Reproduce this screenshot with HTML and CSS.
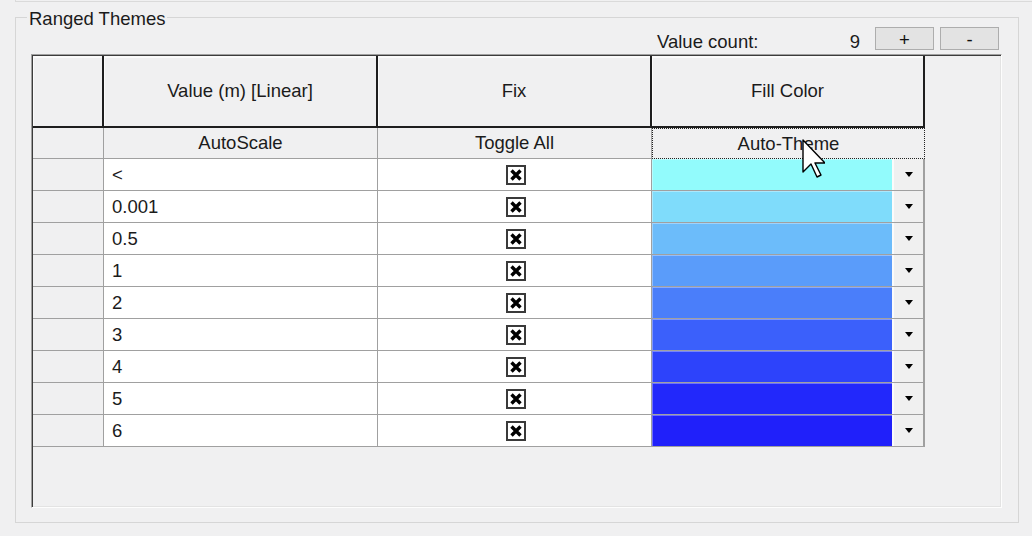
FILE: index.html
```html
<!DOCTYPE html>
<html>
<head>
<meta charset="utf-8">
<link rel="stylesheet" href="styles.css">
</head>
<body>
<div class="topline"></div>
<fieldset class="group">
  <legend>Ranged Themes</legend>
  <div class="controls">
    <div class="count"><span>Value count:</span><span>9</span></div>
    <button class="btn plus">+</button>
    <button class="btn minus">-</button>
  </div>
  <div class="panel">
    <div class="grid">
      <div class="hc"></div>
      <div class="hc">Value (m) [Linear]</div>
      <div class="hc">Fix</div>
      <div class="hc">Fill Color</div>

      <div class="rh"></div>
      <div class="sub">AutoScale</div>
      <div class="sub">Toggle All</div>
      <div class="sub focus">Auto-Theme</div>

      <div class="rh"></div><div class="val">&lt;</div>
      <div class="fix"><svg class="chk" viewBox="0 0 20 20"><rect x="1" y="1" width="18" height="18" fill="#fff" stroke="#3a3a3a" stroke-width="2"/><path d="M5.5 5.5L14.5 14.5M14.5 5.5L5.5 14.5" stroke="#000" stroke-width="3.4"/></svg></div>
      <div class="fill"><div class="swatch c1"></div><div class="dd"><i></i></div></div>

      <div class="rh"></div><div class="val">0.001</div>
      <div class="fix"><svg class="chk" viewBox="0 0 20 20"><rect x="1" y="1" width="18" height="18" fill="#fff" stroke="#3a3a3a" stroke-width="2"/><path d="M5.5 5.5L14.5 14.5M14.5 5.5L5.5 14.5" stroke="#000" stroke-width="3.4"/></svg></div>
      <div class="fill"><div class="swatch c2"></div><div class="dd"><i></i></div></div>

      <div class="rh"></div><div class="val">0.5</div>
      <div class="fix"><svg class="chk" viewBox="0 0 20 20"><rect x="1" y="1" width="18" height="18" fill="#fff" stroke="#3a3a3a" stroke-width="2"/><path d="M5.5 5.5L14.5 14.5M14.5 5.5L5.5 14.5" stroke="#000" stroke-width="3.4"/></svg></div>
      <div class="fill"><div class="swatch c3"></div><div class="dd"><i></i></div></div>

      <div class="rh"></div><div class="val">1</div>
      <div class="fix"><svg class="chk" viewBox="0 0 20 20"><rect x="1" y="1" width="18" height="18" fill="#fff" stroke="#3a3a3a" stroke-width="2"/><path d="M5.5 5.5L14.5 14.5M14.5 5.5L5.5 14.5" stroke="#000" stroke-width="3.4"/></svg></div>
      <div class="fill"><div class="swatch c4"></div><div class="dd"><i></i></div></div>

      <div class="rh"></div><div class="val">2</div>
      <div class="fix"><svg class="chk" viewBox="0 0 20 20"><rect x="1" y="1" width="18" height="18" fill="#fff" stroke="#3a3a3a" stroke-width="2"/><path d="M5.5 5.5L14.5 14.5M14.5 5.5L5.5 14.5" stroke="#000" stroke-width="3.4"/></svg></div>
      <div class="fill"><div class="swatch c5"></div><div class="dd"><i></i></div></div>

      <div class="rh"></div><div class="val">3</div>
      <div class="fix"><svg class="chk" viewBox="0 0 20 20"><rect x="1" y="1" width="18" height="18" fill="#fff" stroke="#3a3a3a" stroke-width="2"/><path d="M5.5 5.5L14.5 14.5M14.5 5.5L5.5 14.5" stroke="#000" stroke-width="3.4"/></svg></div>
      <div class="fill"><div class="swatch c6"></div><div class="dd"><i></i></div></div>

      <div class="rh"></div><div class="val">4</div>
      <div class="fix"><svg class="chk" viewBox="0 0 20 20"><rect x="1" y="1" width="18" height="18" fill="#fff" stroke="#3a3a3a" stroke-width="2"/><path d="M5.5 5.5L14.5 14.5M14.5 5.5L5.5 14.5" stroke="#000" stroke-width="3.4"/></svg></div>
      <div class="fill"><div class="swatch c7"></div><div class="dd"><i></i></div></div>

      <div class="rh"></div><div class="val">5</div>
      <div class="fix"><svg class="chk" viewBox="0 0 20 20"><rect x="1" y="1" width="18" height="18" fill="#fff" stroke="#3a3a3a" stroke-width="2"/><path d="M5.5 5.5L14.5 14.5M14.5 5.5L5.5 14.5" stroke="#000" stroke-width="3.4"/></svg></div>
      <div class="fill"><div class="swatch c8"></div><div class="dd"><i></i></div></div>

      <div class="rh"></div><div class="val">6</div>
      <div class="fix"><svg class="chk" viewBox="0 0 20 20"><rect x="1" y="1" width="18" height="18" fill="#fff" stroke="#3a3a3a" stroke-width="2"/><path d="M5.5 5.5L14.5 14.5M14.5 5.5L5.5 14.5" stroke="#000" stroke-width="3.4"/></svg></div>
      <div class="fill"><div class="swatch c9"></div><div class="dd"><i></i></div></div>
    </div>
  </div>
</fieldset>
<svg class="cursor" viewBox="0 0 12 20" width="24" height="40"><path d="M1 1L1 17L5 13L8 19.5L10 18.5L7 12.5L12 12.5Z" fill="#fff" stroke="#000" stroke-width="0.7" stroke-linejoin="round"/></svg>
</body>
</html>
```

FILE: styles.css
```css
html, body {
  margin: 0;
  background: #f0f0f1;
}
body {
  width: 1032px;
  height: 536px;
  overflow: hidden;
  font-family: "Liberation Sans", Arial, sans-serif;
  font-size: 18.5px;
  color: #1b1b1b;
}
.topline {
  margin-left: 15px;
  height: 1px;
  border-bottom: 1px solid #dadada;
  border-left: 1px solid #dadada;
}
.group {
  margin: 5px 0 0 15px;
  width: 1004px;
  height: 516px;
  box-sizing: border-box;
  border: 1px solid #d6d6d6;
  padding: 0 16px 0 15px;
  min-width: 0;
}
.group legend {
  margin-left: -4px;
  padding: 4px 2px 0;
  line-height: 16px;
  font-size: 18.5px;
}
.controls {
  height: 27px;
  display: flex;
  justify-content: flex-end;
  align-items: flex-start;
  padding-right: 3px;
}
.count {
  width: 203px;
  display: flex;
  justify-content: space-between;
  line-height: 23px;
  padding-top: 3px;
}
.btn {
  width: 59px;
  height: 23px;
  margin-left: 6px;
  box-sizing: border-box;
  background: #e3e3e3;
  border: 1px solid #adadad;
  padding: 2px 0 0;
  font-family: "Liberation Sans", Arial, sans-serif;
  font-size: 18.5px;
  line-height: 19px;
  color: #111;
}
.plus {
  margin-left: 15px;
}
.panel {
  height: 454px;
  box-sizing: border-box;
  border: 1px solid;
  border-color: #a0a0a0 #fdfdfd #fdfdfd #a0a0a0;
  box-shadow: inset 1px 1px 0 #3c3c3c, inset -1px -1px 0 #e3e3e3;
  padding: 1px 0 0 1px;
}
.grid {
  display: grid;
  grid-template-columns: 71px 274px 274px 273px;
  grid-template-rows: 72px 31px;
  grid-auto-rows: 32px;
  width: max-content;
}
.grid > div {
  box-sizing: border-box;
}
.hc {
  border-right: 2px solid #1e1e1e;
  border-bottom: 2px solid #1e1e1e;
  display: flex;
  align-items: center;
  justify-content: center;
  box-shadow: inset 1px 2px 0 #fbfbfb;
}
.sub {
  border-right: 1px solid #a0a0a0;
  border-bottom: 1px solid #a0a0a0;
  display: flex;
  align-items: center;
  justify-content: center;
}
.sub.focus {
  border: 1px dotted #222;
}
.rh {
  border-right: 1px solid #a0a0a0;
  border-bottom: 1px solid #a0a0a0;
}
.val {
  background: #fff;
  border-right: 1px solid #a0a0a0;
  border-bottom: 1px solid #a0a0a0;
  display: flex;
  align-items: center;
  padding-left: 8px;
}
.fix {
  background: #fff;
  border-right: 1px solid #a0a0a0;
  border-bottom: 1px solid #a0a0a0;
  display: flex;
  align-items: center;
  justify-content: center;
  padding-left: 2px;
}
.chk {
  width: 20px;
  height: 20px;
  display: block;
}
.fill {
  border-right: 1px solid #a0a0a0;
  border-bottom: 1px solid #a0a0a0;
  display: flex;
}
.swatch {
  flex: 1;
  box-shadow: inset 1px 1px 0 rgba(255, 255, 255, 0.35);
}
.c1 { background: #92fbfc; }
.c2 { background: #7fdcfb; }
.c3 { background: #6cbcfa; }
.c4 { background: #5a9cfa; }
.c5 { background: #4a7efa; }
.c6 { background: #3b60fb; }
.c7 { background: #2d43fb; }
.c8 { background: #2228fb; }
.c9 { background: #2020fa; }
.dd {
  width: 32px;
  box-sizing: border-box;
  background: #f0f0f0;
  border-left: 2px solid #fbfbfb;
  border-right: 1px solid #a0a0a0;
  display: flex;
  align-items: center;
  justify-content: center;
}
.dd i {
  width: 0;
  height: 0;
  border-left: 4.5px solid transparent;
  border-right: 4.5px solid transparent;
  border-top: 5px solid #000;
}
.cursor {
  position: absolute;
  left: 801px;
  top: 138px;
}
```
